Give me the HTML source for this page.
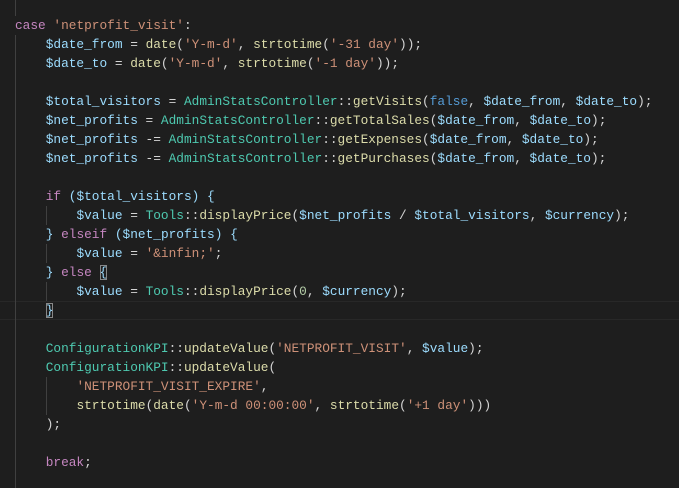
<!DOCTYPE html>
<html><head><meta charset="utf-8"><style>
html,body{margin:0;padding:0;background:#1e1e1e;width:679px;height:488px;overflow:hidden}
.code{position:absolute;left:15px;top:16px;font-family:"Liberation Mono",monospace;font-size:12.8px;line-height:19px;color:#d4d4d4}
.l{height:19px;white-space:pre}
.k{color:#c586c0}.s{color:#ce9178}.v{color:#9cdcfe}.c{color:#4ec9b0}.f{color:#dcdcaa}.b{color:#569cd6}.n{color:#b5cea8}
.p,.q{color:#d4d4d4}.r{color:#d4d4d4}.y{color:#9cdcfe}
.g{position:absolute;width:1px;background:#404040}
.hl{position:absolute;left:0;width:679px;top:301px;height:17px;border-top:1px solid #282828;border-bottom:1px solid #282828}
.bx{outline:1px solid #888;outline-offset:-1px}
</style></head><body>
<div class="hl"></div>
<div class="g" style="left:15px;top:0;height:16px"></div>
<div class="g" style="left:15px;top:35px;height:453px"></div>
<div class="g" style="left:46px;top:206px;height:19px"></div>
<div class="g" style="left:46px;top:244px;height:19px"></div>
<div class="g" style="left:46px;top:282px;height:19px"></div>
<div class="g" style="left:46px;top:377px;height:38px"></div>
<div class="code">
<div class="l"><span class="k">case</span> <span class="s">'netprofit_visit'</span>:</div>
<div class="l">    <span class="v">$date_from</span> = <span class="f">date</span><span class="r">(</span><span class="s">'Y-m-d'</span>, <span class="f">strtotime</span><span class="p">(</span><span class="s">'-31 day'</span><span class="p">)</span><span class="r">)</span>;</div>
<div class="l">    <span class="v">$date_to</span> = <span class="f">date</span><span class="r">(</span><span class="s">'Y-m-d'</span>, <span class="f">strtotime</span><span class="p">(</span><span class="s">'-1 day'</span><span class="p">)</span><span class="r">)</span>;</div>
<div class="l"> </div>
<div class="l">    <span class="v">$total_visitors</span> = <span class="c">AdminStatsController</span>::<span class="f">getVisits</span><span class="r">(</span><span class="b">false</span>, <span class="v">$date_from</span>, <span class="v">$date_to</span><span class="r">)</span>;</div>
<div class="l">    <span class="v">$net_profits</span> = <span class="c">AdminStatsController</span>::<span class="f">getTotalSales</span><span class="r">(</span><span class="v">$date_from</span>, <span class="v">$date_to</span><span class="r">)</span>;</div>
<div class="l">    <span class="v">$net_profits</span> -= <span class="c">AdminStatsController</span>::<span class="f">getExpenses</span><span class="r">(</span><span class="v">$date_from</span>, <span class="v">$date_to</span><span class="r">)</span>;</div>
<div class="l">    <span class="v">$net_profits</span> -= <span class="c">AdminStatsController</span>::<span class="f">getPurchases</span><span class="r">(</span><span class="v">$date_from</span>, <span class="v">$date_to</span><span class="r">)</span>;</div>
<div class="l"> </div>
<div class="l">    <span class="k">if</span> <span class="y">(</span><span class="v">$total_visitors</span><span class="y">)</span> <span class="y">{</span></div>
<div class="l">        <span class="v">$value</span> = <span class="c">Tools</span>::<span class="f">displayPrice</span><span class="p">(</span><span class="v">$net_profits</span> / <span class="v">$total_visitors</span>, <span class="v">$currency</span><span class="p">)</span>;</div>
<div class="l">    <span class="y">}</span> <span class="k">elseif</span> <span class="y">(</span><span class="v">$net_profits</span><span class="y">)</span> <span class="y">{</span></div>
<div class="l">        <span class="v">$value</span> = <span class="s">'&amp;infin;'</span>;</div>
<div class="l">    <span class="y">}</span> <span class="k">else</span> <span class="y bx">{</span></div>
<div class="l">        <span class="v">$value</span> = <span class="c">Tools</span>::<span class="f">displayPrice</span><span class="p">(</span><span class="n">0</span>, <span class="v">$currency</span><span class="p">)</span>;</div>
<div class="l">    <span class="y bx">}</span></div>
<div class="l"> </div>
<div class="l">    <span class="c">ConfigurationKPI</span>::<span class="f">updateValue</span><span class="r">(</span><span class="s">'NETPROFIT_VISIT'</span>, <span class="v">$value</span><span class="r">)</span>;</div>
<div class="l">    <span class="c">ConfigurationKPI</span>::<span class="f">updateValue</span><span class="r">(</span></div>
<div class="l">        <span class="s">'NETPROFIT_VISIT_EXPIRE'</span>,</div>
<div class="l">        <span class="f">strtotime</span><span class="p">(</span><span class="f">date</span><span class="q">(</span><span class="s">'Y-m-d 00:00:00'</span>, <span class="f">strtotime</span><span class="r">(</span><span class="s">'+1 day'</span><span class="r">)</span><span class="q">)</span><span class="p">)</span></div>
<div class="l">    <span class="r">)</span>;</div>
<div class="l"> </div>
<div class="l">    <span class="k">break</span>;</div>
</div>
</body></html>
